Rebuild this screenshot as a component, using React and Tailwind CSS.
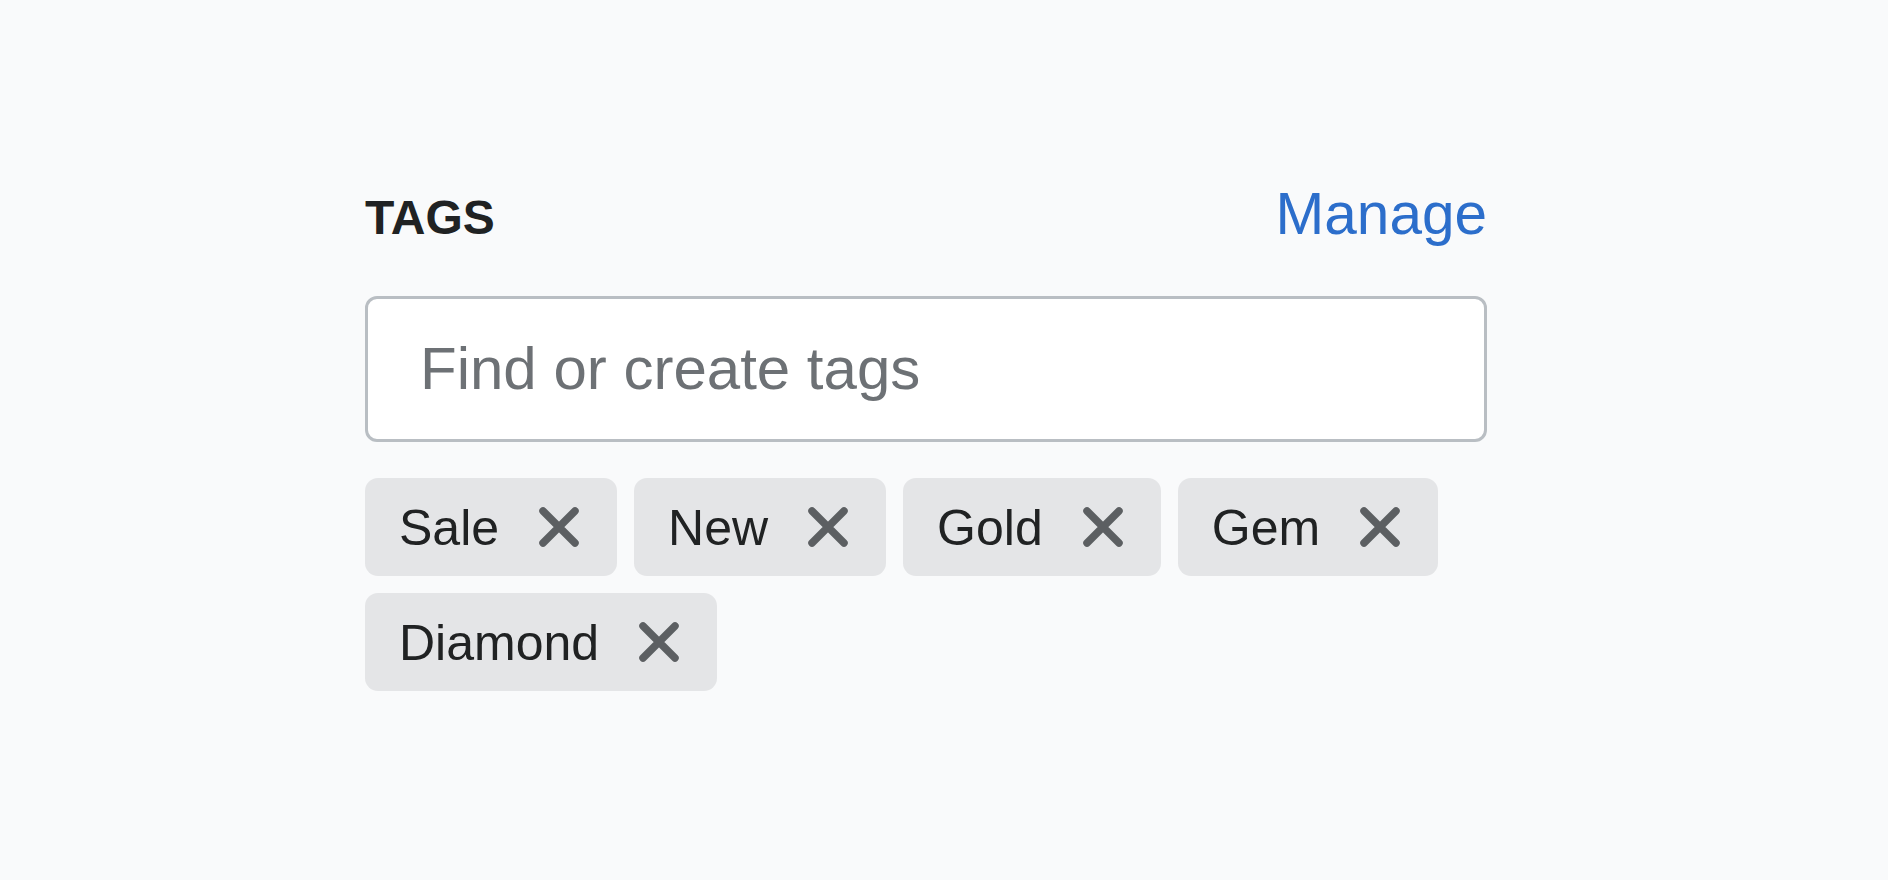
import React from 'react';

const tags = ['Sale', 'New', 'Gold', 'Gem', 'Diamond'];

function XIcon() {
  return (
    <svg width="42" height="42" viewBox="0 0 42 42" className="shrink-0">
      <path d="M5 5 L37 37 M37 5 L5 37" stroke="#5c5f62" strokeWidth="7.5" strokeLinecap="round" fill="none" />
    </svg>
  );
}

function Tag({ label }) {
  return (
    <div className="h-[98px] flex items-center bg-[#e4e5e7] rounded-[13px] pl-[34px] pr-[37px] gap-[39px]">
      <span className="text-[50px] leading-none text-[#202223] pt-[3px]">{label}</span>
      <XIcon />
    </div>
  );
}

export default function App() {
  return (
    <div
      className="min-h-[880px] w-full bg-[#f9fafb] pt-[185px] pl-[365px]"
      style={{ fontFamily: '"Liberation Sans", Arial, sans-serif' }}
    >
      <div className="w-[1122px]">
        {/* Header */}
        <div className="flex items-baseline justify-between">
          <span className="text-[48px] leading-none font-bold text-[#202223]">TAGS</span>
          <button className="text-[58.5px] leading-none text-[#2c6ecb]">Manage</button>
        </div>

        {/* Search input */}
        <div className="mt-[52px] h-[146px] bg-white border-[3px] border-[#b9bec3] rounded-[12px] flex items-center pl-[52px]">
          <input
            className="w-full bg-transparent outline-none text-[60px] leading-none text-[#202223] placeholder:text-[#6d7175]"
            placeholder="Find or create tags"
          />
        </div>

        {/* Tag list */}
        <div className="mt-[36px] flex flex-wrap gap-[17px] w-[1100px]">
          {tags.map((t) => (
            <Tag key={t} label={t} />
          ))}
        </div>
      </div>
    </div>
  );
}
